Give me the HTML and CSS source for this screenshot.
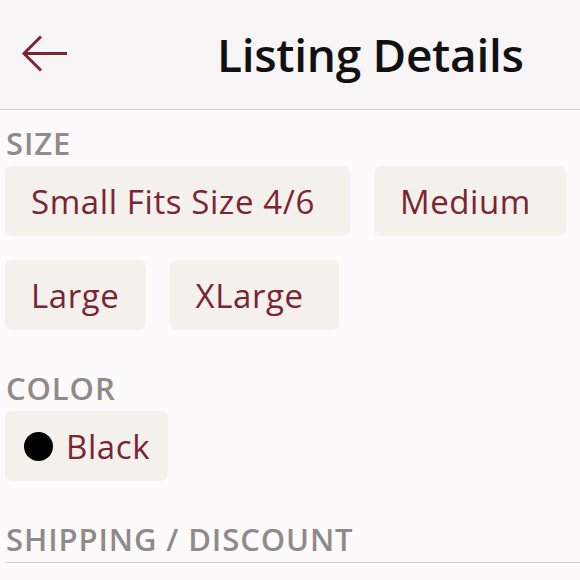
FILE: index.html
```html
<!DOCTYPE html>
<html>
<head>
<meta charset="utf-8">
<link rel="stylesheet" href="styles.css">
</head>
<body>
<header class="topbar">
  <button class="back" aria-label="Back">
    <svg width="48" height="38" viewBox="0 0 48 38"><path d="M46 18.5H3M20 1.5L3 18.5L20 35.5" fill="none" stroke="#7d2436" stroke-width="3"/></svg>
  </button>
  <h1 class="title">Listing Details</h1>
</header>
<main class="content">
  <section class="group">
    <h2 class="label">SIZE</h2>
    <div class="chips">
      <span class="chip">Small Fits Size 4/6</span>
      <span class="chip">Medium</span>
      <span class="chip chip-tight">Large</span>
      <span class="chip">XLarge</span>
    </div>
  </section>
  <section class="group">
    <h2 class="label">COLOR</h2>
    <div class="chips">
      <span class="chip chip-color"><span class="dot"></span>Black</span>
    </div>
  </section>
  <section class="group last">
    <h2 class="label">SHIPPING / DISCOUNT</h2>
  </section>
</main>
</body>
</html>
```
FILE: styles.css
```css
html, body {
  margin: 0;
  padding: 0;
  background: #fcfafa;
  font-family: "Open Sans", "Liberation Sans", sans-serif;
}
.topbar {
  height: 110px;
  background: #f7f5f5;
  border-bottom: 1px solid #cfcdcd;
  display: flex;
  align-items: center;
  box-sizing: border-box;
}
.back {
  background: none;
  border: 0;
  padding: 0;
  margin: 0 0 2px 21px;
  width: 48px;
  height: 38px;
  display: flex;
}
.title {
  margin: 0 0 2px 148px;
  font-size: 46px;
  font-weight: 600;
  color: #111;
  letter-spacing: -0.3px;
}
.content {
  padding: 15px 0 0 5px;
}
.label {
  margin: 0;
  font-size: 31px;
  line-height: 36px;
  font-weight: 600;
  color: #8f8b8a;
  padding-left: 1px;
  letter-spacing: 0.9px;
}
.chips {
  display: flex;
  flex-wrap: wrap;
  gap: 24px 24px;
  margin-top: 5px;
  max-width: 570px;
}
.chip {
  height: 70px;
  box-sizing: border-box;
  padding: 0 35px 0 26px;
  display: flex;
  align-items: center;
  background: #f4f1ed;
  border-radius: 7px;
  color: #7b2433;
  font-size: 33px;
  letter-spacing: 0.6px;
}
.chip-tight { padding-right: 26px; }
.chip-color { padding-right: 18px; }
.dot {
  width: 29px;
  height: 29px;
  border-radius: 50%;
  background: #000;
  margin: 0 13px 0 -7px;
  flex: none;
}
.group { margin-bottom: 40px; }
.group.last {
  border-bottom: 1px solid #cfcdcd;
  padding-bottom: 5px;
}
```
